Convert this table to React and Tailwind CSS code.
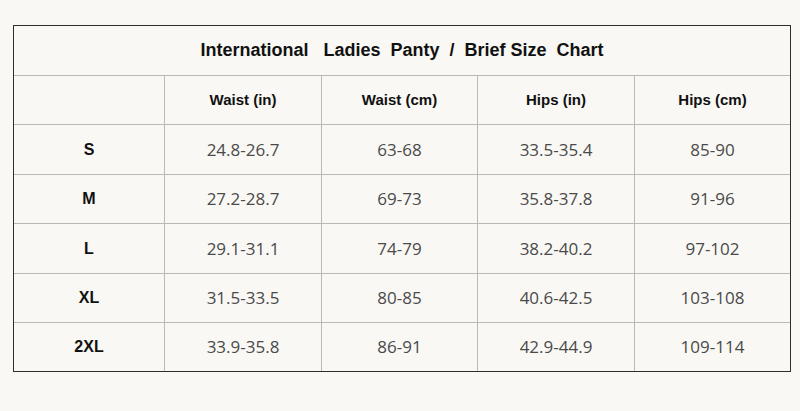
const headers = ["Waist (in)", "Waist (cm)", "Hips (in)", "Hips (cm)"];

const rows = [
  { size: "S", vals: ["24.8-26.7", "63-68", "33.5-35.4", "85-90"], h: "h-[50px]" },
  { size: "M", vals: ["27.2-28.7", "69-73", "35.8-37.8", "91-96"], h: "h-[49px]" },
  { size: "L", vals: ["29.1-31.1", "74-79", "38.2-40.2", "97-102"], h: "h-[50px]" },
  { size: "XL", vals: ["31.5-33.5", "80-85", "40.6-42.5", "103-108"], h: "h-[49px]" },
  { size: "2XL", vals: ["33.9-35.8", "86-91", "42.9-44.9", "109-114"], h: "h-[48px]" },
];

const cols = "grid grid-cols-[151px_157px_156px_157px_155px]";
const cell = "flex items-center justify-center border-r border-[#b9b9b7]";

export default function App() {
  return (
    <div className="w-[800px] h-[411px] bg-[#f9f8f4] pt-[25px] pl-[13px]">
      <div className="w-[778px] border border-[#2e2e2e]">
        {/* title */}
        <div className="h-[50px] flex items-center justify-center border-b border-[#b9b9b7]">
          <span className="whitespace-pre text-[18px] font-bold text-[#111] font-['Liberation_Sans',Arial,sans-serif]">
            {"International   Ladies  Panty  /  Brief Size  Chart"}
          </span>
        </div>

        {/* header */}
        <div className={`${cols} h-[49px] border-b border-[#b9b9b7]`}>
          <div className={cell} />
          {headers.map((h, i) => (
            <div
              key={h}
              className={`${i === 3 ? "flex items-center justify-center" : cell} text-[15px] font-bold text-[#111] font-['Liberation_Sans',Arial,sans-serif]`}
            >
              {h}
            </div>
          ))}
        </div>

        {rows.map((r, ri) => (
          <div
            key={r.size}
            className={`${cols} ${r.h} ${ri < rows.length - 1 ? "border-b border-[#b9b9b7]" : ""}`}
          >
            <div className={`${cell} text-[16px] font-bold text-[#111] font-['Liberation_Sans',Arial,sans-serif]`}>
              {r.size}
            </div>
            {r.vals.map((v, i) => (
              <div
                key={i}
                className={`${i === 3 ? "flex items-center justify-center" : cell} text-[17px] text-[#4a4a4a] font-['Open_Sans',sans-serif]`}
              >
                {v}
              </div>
            ))}
          </div>
        ))}
      </div>
    </div>
  );
}
